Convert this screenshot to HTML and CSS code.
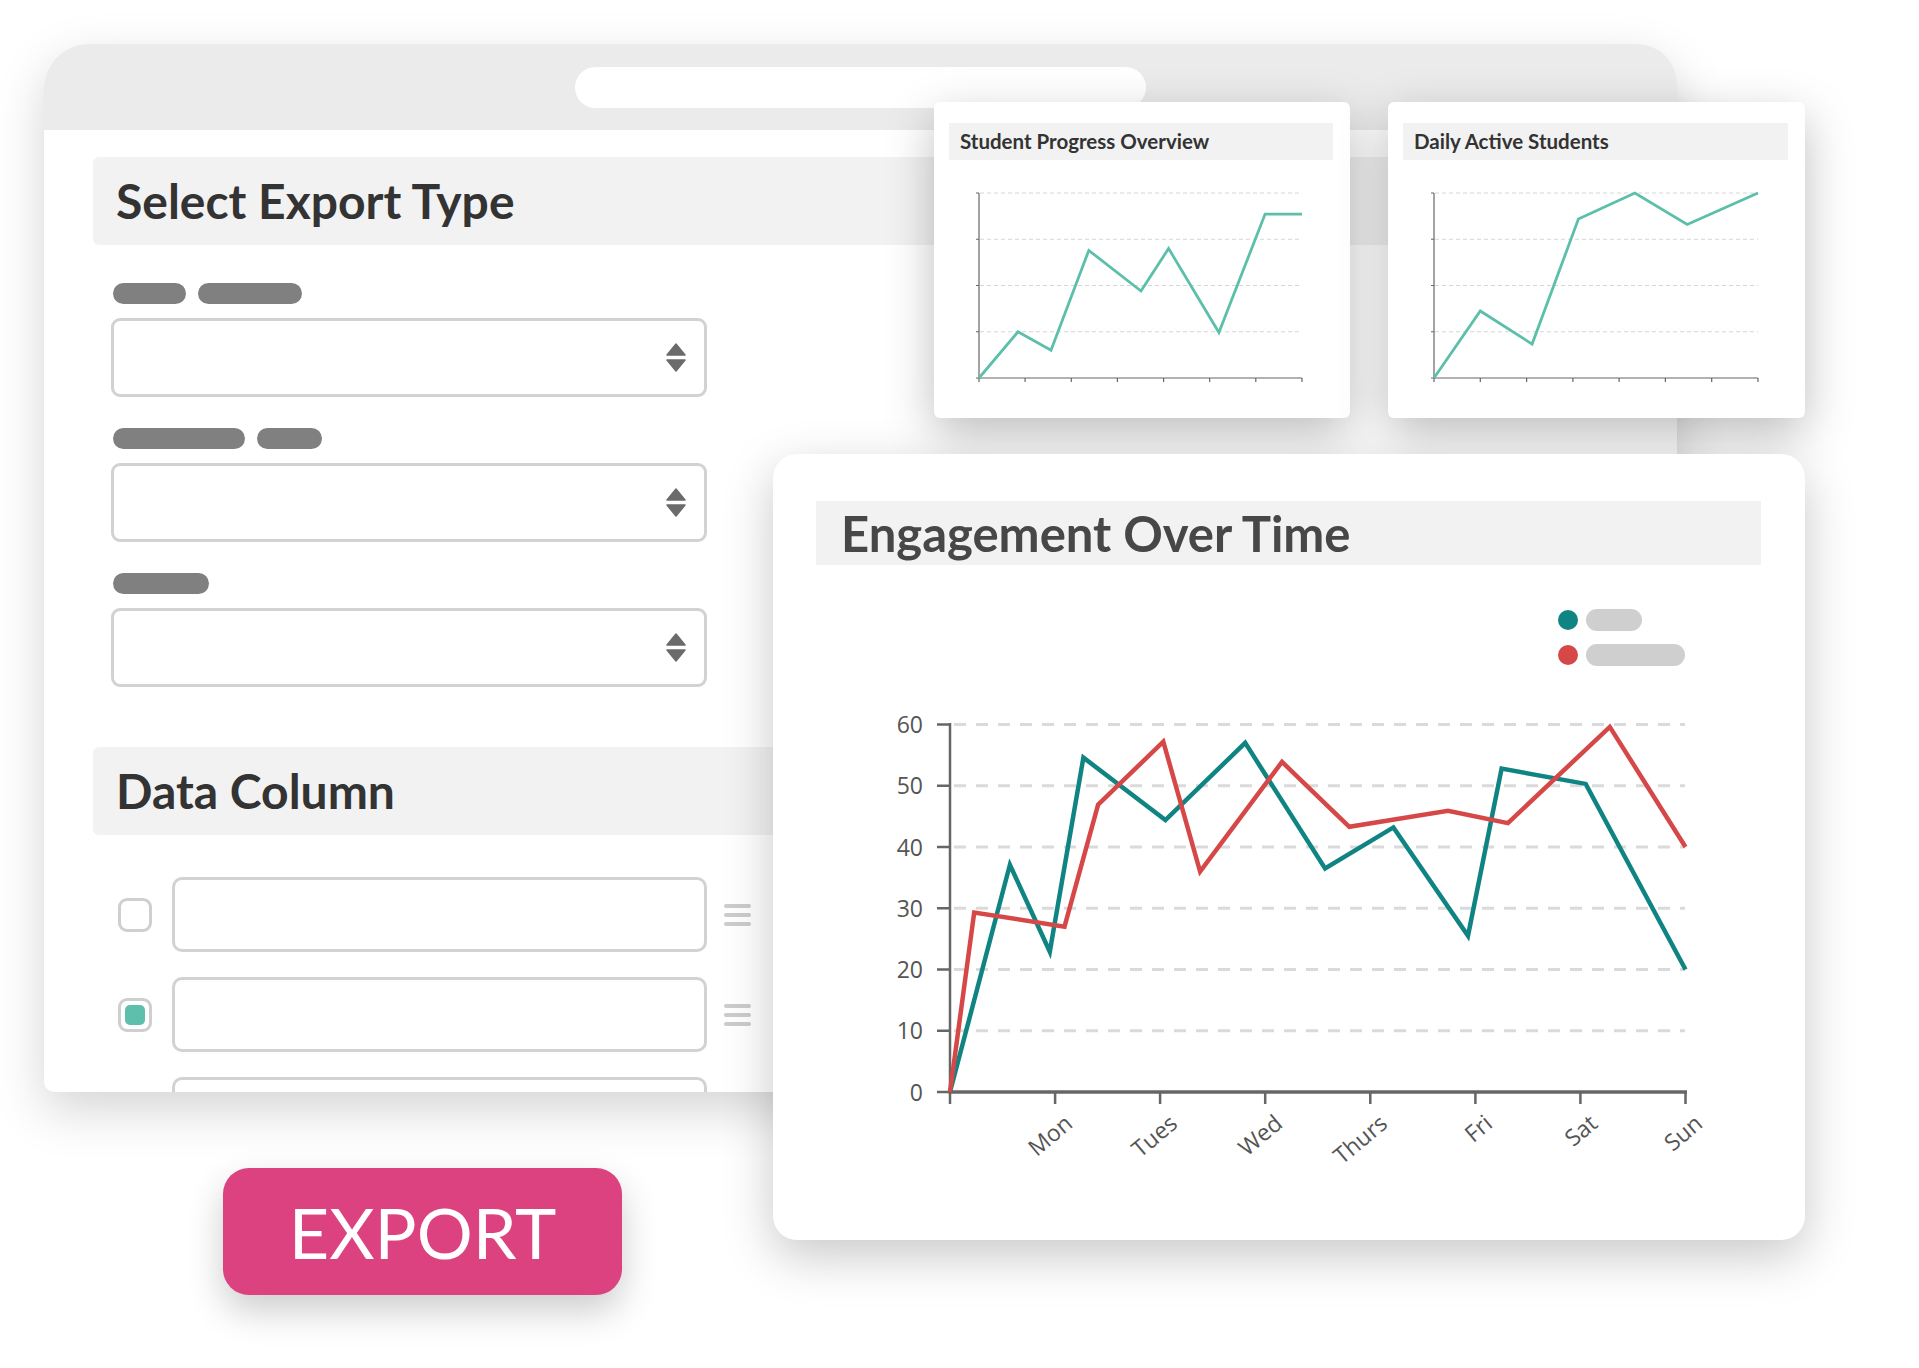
FILE: index.html
```html
<html>
<head>
<meta charset="utf-8">
<title>Export Data</title>
<link rel="stylesheet" href="styles.css">
</head>
<body>
<div class="stage">

<!-- export settings window -->
<div class="window">
    <div class="topbar"><div class="address"></div></div>
    <div class="window-body">
        <div class="section-title">Select Export Type</div>
        <div class="form">
            <div class="field">
                <div class="label"><span class="w73"></span><span class="w104"></span></div>
                <div class="select">
                    <svg class="updown" width="20" height="29" viewBox="0 0 20 29"><path d="M10 1 L19 12 H1 Z"/><path d="M1 17 H19 L10 28 Z"/></svg>
                </div>
            </div>
            <div class="field">
                <div class="label"><span class="w132"></span><span class="w65"></span></div>
                <div class="select">
                    <svg class="updown" width="20" height="29" viewBox="0 0 20 29"><path d="M10 1 L19 12 H1 Z"/><path d="M1 17 H19 L10 28 Z"/></svg>
                </div>
            </div>
            <div class="field">
                <div class="label"><span class="w96"></span></div>
                <div class="select">
                    <svg class="updown" width="20" height="29" viewBox="0 0 20 29"><path d="M10 1 L19 12 H1 Z"/><path d="M1 17 H19 L10 28 Z"/></svg>
                </div>
            </div>
        </div>

        <div class="section-title data">Data Column</div>
        <div class="columns">
            <div class="col-row">
                <span class="check"></span>
                <div class="col-input"></div>
                <span class="handle"><i></i><i></i><i></i></span>
            </div>
            <div class="col-row">
                <span class="check checked"><b></b></span>
                <div class="col-input"></div>
                <span class="handle"><i></i><i></i><i></i></span>
            </div>
            <div class="col-row">
                <span class="check"></span>
                <div class="col-input"></div>
                <span class="handle"><i></i><i></i><i></i></span>
            </div>
        </div>
    </div>
</div>

<div class="export-btn">EXPORT</div>

<!-- small chart cards -->
<div class="card card-small card-progress">
    <div class="card-head">Student Progress Overview</div>
    <svg class="mini-chart" width="416" height="258" viewBox="0 58 416 258">
        <g class="grid">
            <line x1="46" y1="91" x2="368" y2="91"/>
            <line x1="46" y1="137.25" x2="368" y2="137.25"/>
            <line x1="46" y1="183.5" x2="368" y2="183.5"/>
            <line x1="46" y1="229.75" x2="368" y2="229.75"/>
        </g>
        <g class="axis">
            <line x1="45" y1="91" x2="45" y2="276"/>
            <line x1="45" y1="276" x2="368" y2="276" stroke-width="1.6"/>
            <path d="M42 91H45M42 137.25H45M42 183.5H45M42 229.75H45M42 276H45"/>
            <path d="M45 276V280M91.1 276V280M137.3 276V280M183.4 276V280M229.6 276V280M275.7 276V280M321.8 276V280M368 276V280"/>
        </g>
        <polyline class="mini-line" points="45,276 84,229.8 117,248.3 154.8,148.4 207,189 234.6,146.5 284.9,230.5 331.1,112.1 368,112.1"/>
    </svg>
</div>

<div class="card card-small card-active">
    <div class="card-head">Daily Active Students</div>
    <svg class="mini-chart" width="417" height="258" viewBox="0 58 417 258">
        <g class="grid">
            <line x1="47" y1="91" x2="370" y2="91"/>
            <line x1="47" y1="137.25" x2="370" y2="137.25"/>
            <line x1="47" y1="183.5" x2="370" y2="183.5"/>
            <line x1="47" y1="229.75" x2="370" y2="229.75"/>
        </g>
        <g class="axis">
            <line x1="46" y1="91" x2="46" y2="276"/>
            <line x1="46" y1="276" x2="370" y2="276" stroke-width="1.6"/>
            <path d="M43 91H46M43 137.25H46M43 183.5H46M43 229.75H46M43 276H46"/>
            <path d="M46 276V280M92.3 276V280M138.6 276V280M184.9 276V280M231.1 276V280M277.4 276V280M323.7 276V280M370 276V280"/>
        </g>
        <polyline class="mini-line" points="46,276 92.3,209 144.1,242.1 190.4,117.1 246.9,91 299.2,122.5 370,91"/>
    </svg>
</div>

<!-- engagement chart -->
<div class="card card-engage">
    <div class="engage-head">Engagement Over Time</div>
    <svg class="chart" width="1032" height="675" viewBox="0 0 1032 675">
        <g class="legend">
            <circle cx="795" cy="55" r="10" fill="#0f8482"/>
            <rect x="813" y="44" width="56" height="22" rx="11"/>
            <circle cx="795" cy="90" r="10" fill="#d64848"/>
            <rect x="813" y="79" width="99" height="22" rx="11"/>
        </g>
        <g class="grid">
            <line x1="181" y1="159.5" x2="912" y2="159.5"/>
            <line x1="181" y1="220.75" x2="912" y2="220.75"/>
            <line x1="181" y1="282" x2="912" y2="282"/>
            <line x1="181" y1="343.25" x2="912" y2="343.25"/>
            <line x1="181" y1="404.5" x2="912" y2="404.5"/>
            <line x1="181" y1="465.75" x2="912" y2="465.75"/>
        </g>
        <g class="axis">
            <line x1="177" y1="158" x2="177" y2="527" stroke-width="2.5"/>
            <line x1="175.5" y1="527" x2="914" y2="527" stroke-width="3.5"/>
            <path d="M164 159.5H177M164 220.75H177M164 282H177M164 343.25H177M164 404.5H177M164 465.75H177M164 527H177" stroke-width="2.5"/>
            <path d="M177 527V539M282.1 527V539M387.1 527V539M492.2 527V539M597.3 527V539M702.4 527V539M807.4 527V539M912.5 527V539" stroke-width="2.5"/>
        </g>
        <g class="y-labels">
            <text x="150" y="168">60</text>
            <text x="150" y="229.25">50</text>
            <text x="150" y="290.5">40</text>
            <text x="150" y="351.75">30</text>
            <text x="150" y="413">20</text>
            <text x="150" y="474.25">10</text>
            <text x="150" y="535.5">0</text>
        </g>
        <g class="x-labels">
            <text x="301" y="561" transform="rotate(-40 301 561)">Mon</text>
            <text x="406" y="561" transform="rotate(-40 406 561)">Tues</text>
            <text x="511" y="561" transform="rotate(-40 511 561)">Wed</text>
            <text x="616" y="561" transform="rotate(-40 616 561)">Thurs</text>
            <text x="721" y="561" transform="rotate(-40 721 561)">Fri</text>
            <text x="826" y="561" transform="rotate(-40 826 561)">Sat</text>
            <text x="931" y="561" transform="rotate(-40 931 561)">Sun</text>
        </g>
        <polyline class="series teal" points="177,527 236.9,299.8 276.8,386.7 310.4,192.6 392.4,255.1 472.2,177.9 552.1,303.4 620.4,262.4 695,370.8 728.6,203.6 812.7,218.9 912.5,404.5"/>
        <polyline class="series red" points="177,527 201.2,347.5 291.5,361.6 325.1,239.7 390.3,176.7 427.1,306.5 509,196.9 576.3,261.8 675,245.9 734.9,258.1 836.8,161.9 912.5,282"/>
    </svg>
</div>

</div>
</body>
</html>
```

FILE: styles.css
```css
body {
    margin: 0;
    background: #fff;
    font-family: "Lato", "Open Sans", sans-serif;
}

.stage {
    position: relative;
    width: 1919px;
    height: 1368px;
    overflow: hidden;
}

/* window */
.window {
    position: absolute;
    left: 44px;
    top: 44px;
    width: 1633px;
    height: 1048px;
    background: #fff;
    border-radius: 45px 40px 10px 10px;
    box-shadow: 0 18px 50px rgba(0, 0, 0, 0.17);
    overflow: hidden;
}

.topbar {
    height: 86px;
    box-sizing: border-box;
    padding-top: 23px;
    background: #ebebeb;
}

.address {
    width: 571px;
    height: 41px;
    margin-left: 531px;
    background: #fff;
    border-radius: 21px;
}

.window-body {
    padding: 27px 49px 0 49px;
}

.section-title {
    height: 88px;
    padding-left: 23px;
    background: #f2f2f2;
    border-radius: 6px;
    font-size: 48px;
    font-weight: 700;
    line-height: 88px;
    color: #333;
}

.section-title.data {
    margin-top: 60px;
}

.form {
    padding-left: 18px;
}

.field {
    margin-top: 31px;
}

.field:first-child {
    margin-top: 38px;
}

.label {
    display: flex;
    gap: 12px;
    height: 21px;
    margin: 0 0 14px 2px;
}

.label span {
    height: 21px;
    border-radius: 11px;
    background: #808080;
}

.w73 { width: 73px; }
.w104 { width: 104px; }
.w132 { width: 132px; }
.w65 { width: 65px; }
.w96 { width: 96px; }

.select {
    display: flex;
    align-items: center;
    justify-content: flex-end;
    width: 596px;
    height: 79px;
    box-sizing: border-box;
    padding-right: 18px;
    border: 3px solid #d2d2d2;
    border-radius: 9px;
}

.updown path {
    fill: #6b6b6b;
    stroke: #6b6b6b;
    stroke-width: 1.5;
    stroke-linejoin: round;
}

.columns {
    margin-top: 42px;
    padding-left: 25px;
}

.col-row {
    display: flex;
    align-items: center;
    height: 75px;
    margin-bottom: 25px;
}

.check {
    display: flex;
    align-items: center;
    justify-content: center;
    width: 34px;
    height: 34px;
    box-sizing: border-box;
    border: 3px solid #cfcfcf;
    border-radius: 9px;
}

.check b {
    width: 20px;
    height: 20px;
    border-radius: 5px;
    background: #5ebfad;
}

.col-input {
    width: 535px;
    height: 75px;
    box-sizing: border-box;
    margin-left: 20px;
    border: 3px solid #d2d2d2;
    border-radius: 10px;
}

.handle {
    display: flex;
    flex-direction: column;
    gap: 5px;
    margin-left: 17px;
}

.handle i {
    width: 27px;
    height: 4px;
    border-radius: 2px;
    background: #cccccc;
}

/* export button */
.export-btn {
    position: absolute;
    left: 223px;
    top: 1168px;
    width: 399px;
    height: 127px;
    display: flex;
    align-items: center;
    justify-content: center;
    background: #dc4280;
    border-radius: 26px;
    box-shadow: 0 16px 36px rgba(0, 0, 0, 0.2);
    color: #fff;
    font-size: 70px;
    font-weight: 400;
}

/* cards */
.card {
    position: absolute;
    background: #fff;
}

.card-small {
    top: 102px;
    height: 316px;
    border-radius: 6px;
    box-shadow: 0 16px 48px rgba(0, 0, 0, 0.26);
}

.card-progress {
    left: 934px;
    width: 416px;
}

.card-active {
    left: 1388px;
    width: 417px;
}

.card-head {
    height: 37px;
    margin: 21px 17px 0 15px;
    padding-left: 11px;
    background: #f2f2f2;
    font-size: 20.5px;
    font-weight: 700;
    line-height: 37px;
    color: #333;
}

.mini-chart {
    display: block;
}

.mini-chart .grid line {
    stroke: #d6d6d6;
    stroke-width: 1;
    stroke-dasharray: 4 3;
}

.mini-chart .axis line,
.mini-chart .axis path {
    stroke: #666;
    stroke-width: 1.2;
    fill: none;
}

.mini-line {
    fill: none;
    stroke: #5cbfaa;
    stroke-width: 2.8;
}

.card-engage {
    left: 773px;
    top: 454px;
    width: 1032px;
    height: 786px;
    border-radius: 24px;
    box-shadow: 0 16px 50px rgba(0, 0, 0, 0.22);
}

.engage-head {
    height: 64px;
    margin: 47px 44px 0 43px;
    padding-left: 25px;
    background: #f2f2f2;
    font-size: 49px;
    font-weight: 700;
    line-height: 64px;
    color: #474747;
}

.chart {
    display: block;
}

.chart .legend rect {
    fill: #cfcfcf;
}

.chart .grid line {
    stroke: #dadada;
    stroke-width: 3;
    stroke-dasharray: 12 10;
}

.chart .axis line,
.chart .axis path {
    stroke: #666;
    fill: none;
}

.chart text {
    font-family: "Open Sans", sans-serif;
    font-size: 23px;
    fill: #555;
    text-anchor: end;
}

.series {
    fill: none;
    stroke-width: 4.5;
}

.series.teal {
    stroke: #0f8482;
}

.series.red {
    stroke: #d64848;
}
```
